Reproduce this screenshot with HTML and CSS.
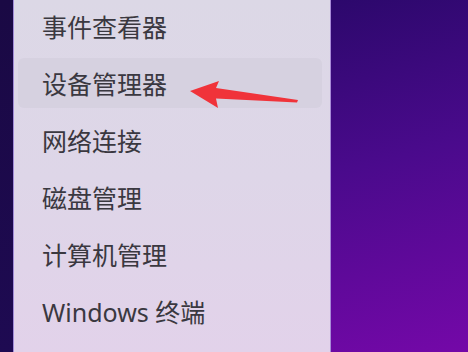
FILE: index.html
```html
<!DOCTYPE html>
<html lang="zh-CN">
<head>
<meta charset="utf-8">
<link rel="stylesheet" href="styles.css">
</head>
<body>
<div class="strip"></div>
<div class="panel">
  <ul class="menu">
    <li class="item">事件查看器</li>
    <li class="item active">设备管理器</li>
    <li class="item">网络连接</li>
    <li class="item">磁盘管理</li>
    <li class="item">计算机管理</li>
    <li class="item">Windows 终端</li>
  </ul>
  <svg class="arrow" width="120" height="40" viewBox="185 75 120 40">
    <polygon points="190,91 219,81 216,88 298,100 297,102.5 216,98.5 218,108" fill="#f0333a"/>
  </svg>
</div>
<div class="desk"></div>
</body>
</html>
```
FILE: styles.css
```css
html, body {
  margin: 0;
  padding: 0;
  width: 468px;
  height: 352px;
  overflow: hidden;
}
body {
  display: flex;
  background: #1c0a4a;
  font-family: "Noto Sans", "Noto Sans CJK SC", sans-serif;
}
.strip {
  width: 13px;
  flex: none;
  background: linear-gradient(180deg, #1a0944, #1e0a52);
}
.panel {
  position: relative;
  width: 316px;
  flex: none;
  border-left: 1px solid #a28cd8;
  border-right: 1px solid #a88ad8;
  background: linear-gradient(180deg, #dcd8e6 0%, #ded6e8 50%, #e2d2ea 100%);
}
.menu {
  list-style: none;
  margin: 0;
  padding: 1px 8px 0 4px;
  display: flex;
  flex-direction: column;
  gap: 7px;
}
.item {
  height: 50px;
  display: flex;
  align-items: center;
  padding-left: 24px;
  border-radius: 6px;
  font-size: 25px;
  color: #3a3840;
  letter-spacing: 0;
}
.item.active {
  background: #d6d1e0;
}
.arrow {
  position: absolute;
  left: 171px;
  top: 75px;
}
.desk {
  flex: 1;
  background: linear-gradient(165deg, #2c086c 0%, #4a0a8c 45%, #7408a8 100%);
}
```
